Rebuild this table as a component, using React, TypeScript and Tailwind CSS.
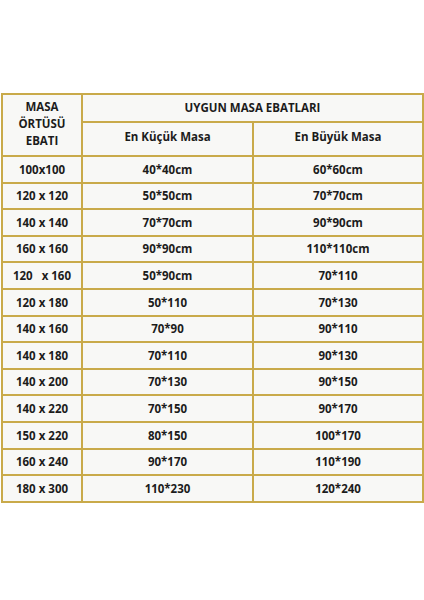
const rows: [string, string, string][] = [
  ["100x100", "40*40cm", "60*60cm"],
  ["120 x 120", "50*50cm", "70*70cm"],
  ["140 x 140", "70*70cm", "90*90cm"],
  ["160 x 160", "90*90cm", "110*110cm"],
  ["120 \u00a0 x 160", "50*90cm", "70*110"],
  ["120 x 180", "50*110", "70*130"],
  ["140 x 160", "70*90", "90*110"],
  ["140 x 180", "70*110", "90*130"],
  ["140 x 200", "70*130", "90*150"],
  ["140 x 220", "70*150", "90*170"],
  ["150 x 220", "80*150", "100*170"],
  ["160 x 240", "90*170", "110*190"],
  ["180 x 300", "110*230", "120*240"],
];

const cell = "border-2 border-[#c9aa4a] text-center align-middle p-0";

export default function App() {
  return (
    <div className="w-[424px] h-[600px] bg-white pt-[93px] pl-[1px]">
      <table
        className="w-[421px] border-collapse bg-[#f8f8f6] text-[11.5px] font-bold text-[#1c1c1c] table-fixed"
        style={{ fontFamily: '"Open Sans", "Noto Sans", sans-serif' }}
      >
        <colgroup>
          <col className="w-[80px]" />
          <col className="w-[171px]" />
          <col className="w-[170px]" />
        </colgroup>
        <thead>
          <tr className="h-[28px]">
            <th rowSpan={2} className={`${cell} leading-[17px] font-bold pb-[4px]`}>
              MASA
              <br />
              ÖRTÜSÜ
              <br />
              EBATI
            </th>
            <th colSpan={2} className={`${cell} font-bold`}>
              UYGUN MASA EBATLARI
            </th>
          </tr>
          <tr className="h-[34px]">
            <th className={`${cell} font-bold pb-[4px]`}>En Küçük Masa</th>
            <th className={`${cell} font-bold pb-[4px]`}>En Büyük Masa</th>
          </tr>
        </thead>
        <tbody>
          {rows.map((r) => (
            <tr key={r[0]} className="h-[26.6px]">
              <td className={`${cell} whitespace-pre`}>{r[0]}</td>
              <td className={cell}>{r[1]}</td>
              <td className={cell}>{r[2]}</td>
            </tr>
          ))}
        </tbody>
      </table>
    </div>
  );
}
